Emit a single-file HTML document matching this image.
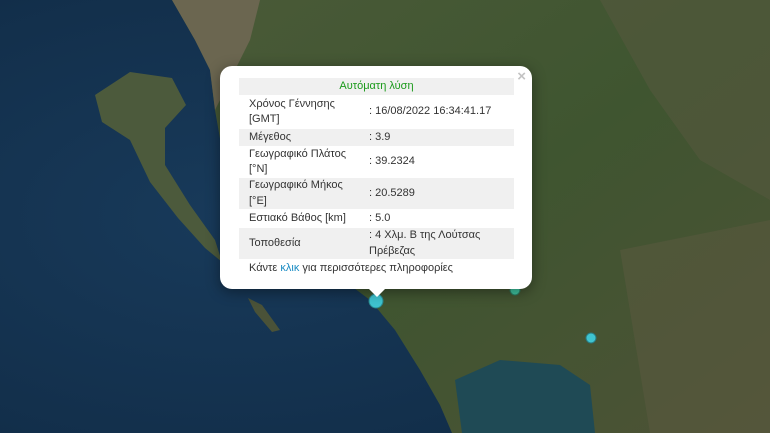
<!DOCTYPE html>
<html><head><meta charset="utf-8"><style>
html,body{margin:0;padding:0;width:770px;height:433px;overflow:hidden;background:#13304a}
svg{position:absolute;left:0;top:0}
.pop{position:absolute;left:220px;top:66px;width:312px;height:223px;background:#fff;border-radius:12px;box-shadow:0 3px 14px rgba(0,0,0,.4);font-family:"Liberation Sans","DejaVu Sans",sans-serif;font-size:11px;color:#333}
.tip{position:absolute;left:368px;top:288px;width:0;height:0;border-left:9px solid transparent;border-right:9px solid transparent;border-top:9px solid #fff}
.x{position:absolute;right:6px;top:2px;color:#c3c3c3;font-size:15px;font-weight:bold}
table{position:absolute;left:19px;top:12px;width:275px;border-collapse:collapse}
td{padding:0 0 0 10px;line-height:15.5px;vertical-align:middle}
tr.g{background:#f0f0f0}
td.v{padding-left:0;width:145px}
.f{position:absolute;left:29px;top:196px}
a{color:#1a8cc4;text-decoration:none}
</style></head><body>
<svg width="770" height="433" viewBox="0 0 770 433">
<defs>
<radialGradient id="s" cx=".3" cy=".5" r=".8"><stop offset="0" stop-color="#183a5a"/><stop offset="1" stop-color="#102a44"/></radialGradient>
<linearGradient id="l" x1="0" y1="0" x2="1" y2="1"><stop offset="0" stop-color="#4a5a38"/><stop offset=".5" stop-color="#3f5530"/><stop offset="1" stop-color="#4d5236"/></linearGradient>
</defs>
<rect width="770" height="433" fill="url(#s)"/>
<path d="M172,0 L770,0 L770,433 L452,433 L440,405 L420,370 L395,330 L370,300 L330,270 L260,230 L235,200 L222,150 L215,110 L210,70 L195,40 Z" fill="url(#l)"/>
<path d="M172,0 L260,0 L250,40 L225,90 L215,110 L210,70 L195,40 Z" fill="#6b6650"/>
<path d="M600,0 L770,0 L770,200 L700,160 L650,90 Z" fill="#55583e" opacity=".6"/>
<path d="M620,250 L770,220 L770,433 L650,433 Z" fill="#5b5a40" opacity=".5"/>
<path d="M455,380 L500,360 L560,365 L590,385 L595,433 L462,433 Z" fill="#1f4a55"/>
<path d="M95,95 L130,72 L172,78 L186,105 L165,128 L165,165 L190,205 L215,240 L222,262 L205,248 L178,218 L150,182 L130,140 L102,122 Z" fill="#4c5a3c"/>
<path d="M248,298 L262,305 L280,330 L272,332 L255,312 Z" fill="#4a5238"/>
<circle cx="376" cy="301" r="7" fill="#3fc4d0" stroke="#2a8a90" stroke-width="1"/>
<circle cx="515" cy="290" r="5" fill="#3fc4a0" stroke="#2a7a60"/>
<circle cx="591" cy="338" r="5" fill="#3fc4d0" stroke="#2a7a80"/>
</svg>
<div class="pop">
<div class="x">×</div>
<table>
<tr class="g"><td colspan="2" style="text-align:center;color:#1a9a1a;height:17px;padding:0">Αυτόματη λύση</td></tr>
<tr style="height:34px"><td>Χρόνος Γέννησης<br>[GMT]</td><td class="v">: 16/08/2022 16:34:41.17</td></tr>
<tr class="g" style="height:17px"><td>Μέγεθος</td><td class="v">: 3.9</td></tr>
<tr style="height:32px"><td>Γεωγραφικό Πλάτος<br>[°N]</td><td class="v">: 39.2324</td></tr>
<tr class="g" style="height:31px"><td>Γεωγραφικό Μήκος<br>[°E]</td><td class="v">: 20.5289</td></tr>
<tr style="height:19px"><td>Εστιακό Βάθος [km]</td><td class="v">: 5.0</td></tr>
<tr class="g" style="height:31px"><td>Τοποθεσία</td><td class="v">: 4 Χλμ. Β της Λούτσας Πρέβεζας</td></tr>
</table>
<div class="f">Κάντε <a>κλικ</a> για περισσότερες πληροφορίες</div>
</div>
<div class="tip"></div>
</body></html>
